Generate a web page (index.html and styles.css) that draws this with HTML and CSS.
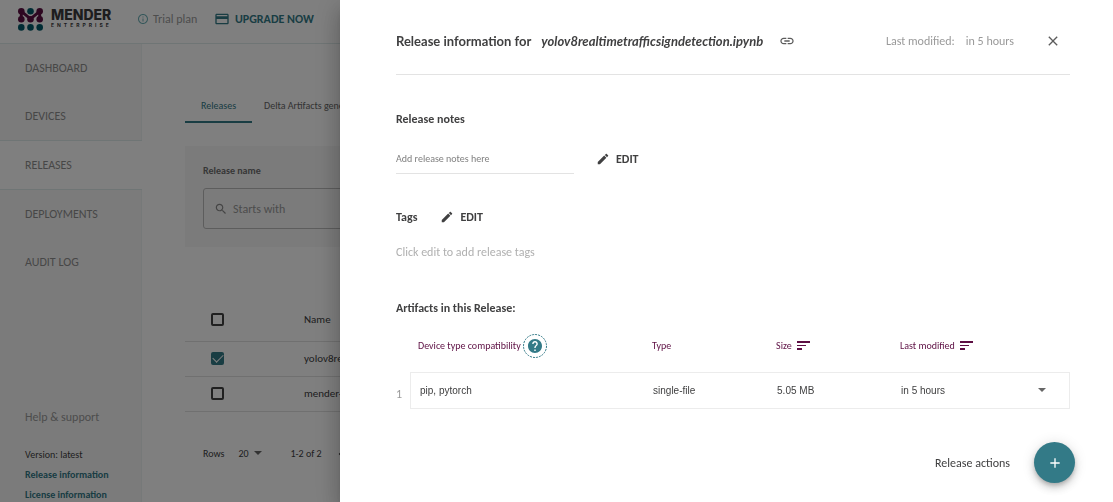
FILE: index.html
```html
<!DOCTYPE html>
<html lang="en">
<head>
<meta charset="utf-8">
<meta name="viewport" content="width=device-width, initial-scale=1">
<title>Mender – Releases</title>
<link rel="stylesheet" href="styles.css">
</head>
<body>
<div class="app">
  <header class="topbar">
    <a class="brand" href="#">
      <svg class="brand-mark" viewBox="0 0 76 70" aria-hidden="true">
        <path d="M10 10L38 33L66 10M10 10V34M66 10V34" fill="none" stroke="#5d0f43" stroke-width="9"/>
        <g fill="#5d0f43"><circle cx="10" cy="10" r="10"/><circle cx="66" cy="10" r="10"/><circle cx="10" cy="34" r="10"/><circle cx="38" cy="34" r="10"/><circle cx="66" cy="34" r="10"/></g>
        <g fill="#015969"><circle cx="38" cy="10" r="10"/><circle cx="10" cy="59" r="10"/><circle cx="38" cy="59" r="10"/><circle cx="66" cy="59" r="10"/></g>
      </svg>
      <span class="brand-text"><span class="brand-name">MENDER</span><span class="brand-tier">ENTERPRISE</span></span>
    </a>
    <span class="plan">
      <svg class="icon-10" viewBox="2 2 20 20" aria-hidden="true"><path fill="#6db0b7" d="M11 7h2v2h-2zm0 4h2v6h-2zm1-9C6.480 2 2 6.480 2 12s4.480 10 10 10 10-4.480 10-10S17.520 2 12 2zm0 18c-4.410 0-8-3.590-8-8s3.590-8 8-8 8 3.590 8 8-3.590 8-8 8z"/></svg>
      Trial plan
    </span>
    <a class="upgrade" href="#">
      <svg class="icon-16" viewBox="0 0 24 24" aria-hidden="true"><path fill="currentColor" d="M20 4H4c-1.110 0-1.990.890-1.990 2L2 18c0 1.110.890 2 2 2h16c1.110 0 2-.890 2-2V6c0-1.110-.890-2-2-2zm0 14H4v-6h16v6zm0-10H4V6h16v2z"/></svg>
      UPGRADE NOW
    </a>
  </header>
  <div class="body">
    <nav class="sidebar">
      <a class="nav-item" href="#">DASHBOARD</a>
      <a class="nav-item" href="#">DEVICES</a>
      <a class="nav-item active" href="#">RELEASES</a>
      <a class="nav-item" href="#">DEPLOYMENTS</a>
      <a class="nav-item" href="#">AUDIT LOG</a>
      <div class="nav-foot">
        <a class="help" href="#">Help &amp; support</a>
        <span>Version: latest</span>
        <a class="info" href="#">Release information</a>
        <a class="info" href="#">License information</a>
      </div>
    </nav>
    <main class="content">
      <div class="tabs">
        <button class="tab selected" type="button">Releases</button>
        <button class="tab" type="button">Delta Artifacts generation</button>
      </div>
      <div class="filters">
        <label for="release-name">Release name</label>
        <div class="search">
          <svg class="icon-14" viewBox="0 0 24 24" aria-hidden="true"><path fill="currentColor" d="M15.500 14h-.790l-.280-.270C15.410 12.590 16 11.110 16 9.500 16 5.910 13.090 3 9.500 3S3 5.910 3 9.500 5.910 16 9.500 16c1.610 0 3.090-.590 4.230-1.570l.270.280v.790l5 4.990L20.490 19l-4.990-5zm-6 0C7.010 14 5 11.990 5 9.500S7.010 5 9.500 5 14 7.010 14 9.500 11.990 14 9.500 14z"/></svg>
          <input id="release-name" type="text" placeholder="Starts with">
        </div>
      </div>
      <table class="releases">
        <thead><tr><th class="pick"><input type="checkbox" aria-label="Select all"></th><th>Name</th></tr></thead>
        <tbody>
          <tr><td class="pick"><input type="checkbox" aria-label="Select first release" checked></td><td>yolov8realtime</td></tr>
          <tr><td class="pick"><input type="checkbox" aria-label="Select second release"></td><td>mender-demo</td></tr>
        </tbody>
      </table>
      <div class="pager">
        <label for="rows">Rows</label>
        <span class="rows-field">
          <select id="rows"><option>20</option><option>50</option></select>
          <svg class="caret" viewBox="0 0 10 5" aria-hidden="true"><path fill="currentColor" d="M1 0h8L5 4z"/></svg>
        </span>
        <span>1-2 of 2</span>
        <button class="prev" type="button" aria-label="Previous page"><svg class="icon-14" viewBox="0 0 24 24" aria-hidden="true"><path fill="currentColor" d="M15.410 7.410L14 6l-6 6 6 6 1.410-1.410L10.830 12z"/></svg></button>
      </div>
    </main>
  </div>
</div>
<div class="backdrop"></div>
<aside class="drawer" aria-label="Release information">
  <header class="drawer-head">
    <h1>Release information for <em>yolov8realtimetrafficsigndetection.ipynb</em></h1>
    <button class="icon-button" type="button" aria-label="Copy link"><svg class="icon-16" viewBox="0 0 24 24" aria-hidden="true"><path fill="currentColor" d="M3.900 12c0-1.710 1.390-3.100 3.100-3.100h4V7H7c-2.760 0-5 2.240-5 5s2.240 5 5 5h4v-1.900H7c-1.710 0-3.100-1.390-3.100-3.100zM8 13h8v-2H8v2zm9-6h-4v1.900h4c1.710 0 3.100 1.390 3.100 3.100s-1.390 3.100-3.100 3.100h-4V17h4c2.760 0 5-2.240 5-5s-2.240-5-5-5z"/></svg></button>
    <p class="modified"><span>Last modified:</span><time>in 5 hours</time></p>
    <button class="icon-button" type="button" aria-label="Close"><svg class="icon-16" viewBox="0 0 24 24" aria-hidden="true"><path fill="currentColor" d="M19 6.410L17.590 5 12 10.590 6.410 5 5 6.410 10.590 12 5 17.590 6.410 19 12 13.410 17.590 19 19 17.590 13.410 12z"/></svg></button>
  </header>
  <section class="notes">
    <h2><label for="notes">Release notes</label></h2>
    <div class="notes-row">
      <input id="notes" type="text" placeholder="Add release notes here">
      <button class="edit" type="button"><svg class="icon-14" viewBox="0 0 24 24" aria-hidden="true"><path fill="currentColor" d="M3 17.250V21h3.750L17.810 9.940l-3.750-3.750L3 17.250zM20.710 7.040c.390-.390.390-1.020 0-1.410l-2.340-2.340c-.390-.390-1.020-.390-1.410 0l-1.830 1.830 3.750 3.750 1.830-1.830z"/></svg>EDIT</button>
    </div>
  </section>
  <section class="tags">
    <div class="tags-row">
      <h2>Tags</h2>
      <button class="edit" type="button"><svg class="icon-14" viewBox="0 0 24 24" aria-hidden="true"><path fill="currentColor" d="M3 17.250V21h3.750L17.810 9.940l-3.750-3.750L3 17.250zM20.710 7.040c.390-.390.390-1.020 0-1.410l-2.340-2.340c-.390-.390-1.020-.390-1.410 0l-1.830 1.830 3.750 3.750 1.830-1.830z"/></svg>EDIT</button>
    </div>
    <p>Click edit to add release tags</p>
  </section>
  <section class="artifacts">
    <h2>Artifacts in this Release:</h2>
    <table>
      <colgroup><col class="c-index"><col><col class="c-data"><col class="c-data"><col class="c-data"><col class="c-toggle"></colgroup>
      <thead>
        <tr>
          <th></th>
          <th><span class="head">Device type compatibility
            <button class="hint" type="button" aria-label="Help"><svg viewBox="0 0 24 24" aria-hidden="true"><circle cx="12" cy="12" r="11.500" fill="none" stroke="currentColor" stroke-dasharray="2 1"/><path fill="currentColor" transform="translate(3.600 3.600) scale(.7)" d="M12 2C6.480 2 2 6.480 2 12s4.480 10 10 10 10-4.480 10-10S17.520 2 12 2zm1 17h-2v-2h2v2zm2.070-7.750l-.900.920C13.450 12.900 13 13.500 13 15h-2v-.500c0-1.100.450-2.100 1.170-2.830l1.240-1.260c.370-.360.590-.860.590-1.410 0-1.100-.900-2-2-2s-2 .900-2 2H8c0-2.210 1.790-4 4-4s4 1.790 4 4c0 .880-.360 1.680-.930 2.250z"/></svg></button></span></th>
          <th>Type</th>
          <th><span class="head">Size <svg class="sort" viewBox="0 0 13 9" aria-hidden="true"><path fill="currentColor" d="M0 0h13v2H0zM0 4h9v1H0zM0 7h5v2H0z"/></svg></span></th>
          <th><span class="head">Last modified <svg class="sort" viewBox="0 0 13 9" aria-hidden="true"><path fill="currentColor" d="M0 0h13v2H0zM0 4h9v1H0zM0 7h5v2H0z"/></svg></span></th>
          <th></th>
        </tr>
      </thead>
      <tbody>
        <tr>
          <td class="index">1</td>
          <td>pip, pytorch</td>
          <td>single-file</td>
          <td>5.05 MB</td>
          <td>in 5 hours</td>
          <td class="toggle"><button type="button" aria-label="Expand artifact"><svg class="caret" viewBox="0 0 10 5" aria-hidden="true"><path fill="currentColor" d="M1 0h8L5 4z"/></svg></button></td>
        </tr>
      </tbody>
    </table>
  </section>
  <footer class="actions">
    <span id="actions-label">Release actions</span>
    <button class="fab" type="button" aria-labelledby="actions-label"><svg class="icon-16" viewBox="0 0 24 24" aria-hidden="true"><path fill="currentColor" d="M19 13h-6v6h-2v-6H5v-2h6V5h2v6h6v2z"/></svg></button>
  </footer>
</aside>
</body>
</html>
```

FILE: styles.css
```css
* { box-sizing: border-box; }

body {
  margin: 0;
  font: 12px/16px Carlito, Lato, sans-serif;
  color: #404041;
  background: #fff;
}

a { color: inherit; text-decoration: none; }
h1, h2, p { margin: 0; }
svg { display: block; flex: none; }

button {
  padding: 0;
  border: 0;
  background: none;
  color: inherit;
  font: inherit;
  cursor: pointer;
}

.icon-10 { width: 10px; height: 10px; }
.icon-14 { width: 14px; height: 14px; }
.icon-16 { width: 16px; height: 16px; }

/* Application behind the drawer */
.app {
  display: flex;
  flex-direction: column;
  height: 100vh;
  overflow: hidden;
}

.topbar {
  display: flex;
  align-items: center;
  flex: none;
  height: 44px;
  padding: 0 18px 5px;
  border-bottom: 1px solid #dfebeb;
}

.brand { display: flex; align-items: center; gap: 8px; width: 120px; }
.brand-mark { width: 25px; height: 23px; }
.brand-text { display: flex; flex-direction: column; gap: 2px; padding-bottom: 1px; color: #3a3a3c; }
.brand-name { font: 800 14px/12px Inter, sans-serif; }
.brand-tier { font: 700 5px/5px Inter, sans-serif; letter-spacing: 3px; }

.plan {
  display: flex;
  align-items: center;
  gap: 5px;
  width: 76px;
  white-space: nowrap;
  color: #9a9a9a;
}

.upgrade {
  display: flex;
  align-items: center;
  gap: 5px;
  font-weight: 700;
  color: #337a87;
}

.body { display: flex; flex: 1; min-height: 0; }

.sidebar {
  display: flex;
  flex-direction: column;
  flex: none;
  width: 142px;
  background: #f7f7f7;
  border-right: 1px solid #edf2f2;
}

.nav-item {
  flex: none;
  padding: 16px 25px;
  color: #8f8f8f;
}

.nav-item.active {
  margin-right: -1px;
  border: solid #dfebeb;
  border-width: 1px 0;
  background: #fff;
}

.nav-foot {
  display: flex;
  flex-direction: column;
  gap: 4px;
  margin: auto 0 -1px;
  padding-left: 25px;
  font-size: 10px;
}

.help { margin-bottom: 18px; font-size: 12px; color: #9a9a9a; }
.info { font-weight: 700; color: #337a87; }

.content { flex: 1; min-width: 0; padding: 44px 43px 0; }

.tabs { display: flex; }

.tab {
  min-width: 67px;
  padding: 10px 12px 7px;
  border-bottom: 2px solid transparent;
  font-size: 10px;
  white-space: nowrap;
  color: #666;
}

.tab.selected { border-color: #337a87; color: #337a87; }

.filters {
  margin-top: 23px;
  padding: 17px 18px 18px;
  background: #f7f7f7;
  font-size: 10px;
  font-weight: 700;
  color: #6f6f6f;
}

.search {
  display: flex;
  align-items: center;
  gap: 5px;
  height: 41px;
  margin-top: 9px;
  padding: 0 10px;
  border: 1px solid #bbb;
  border-radius: 3px;
  color: #8a8a8a;
}

.search input {
  flex: 1;
  min-width: 0;
  padding: 0;
  border: 0;
  outline: 0;
  background: none;
  font: 12px/16px Carlito, Lato, sans-serif;
}

.search input::placeholder { color: #999; }

.releases {
  width: 100%;
  margin-top: 52px;
  border-collapse: collapse;
  font-size: 11px;
}

.releases th, .releases td {
  height: 35px;
  padding: 0;
  border-bottom: 1px solid #e0e0e0;
  text-align: left;
  font-weight: 400;
}

.releases th { height: 42px; }
.releases .pick { width: 119px; padding-left: 26px; }

.releases input {
  display: grid;
  place-items: center;
  width: 13px;
  height: 13px;
  margin: 0;
  appearance: none;
  border: 2px solid #404041;
  border-radius: 2px;
}

.releases input:checked {
  border-color: #337a87;
  background: #337a87;
}

.releases input:checked::after {
  content: "";
  width: 9px;
  height: 5px;
  margin-bottom: 3px;
  border: solid #fff;
  border-width: 0 0 1px 1px;
  transform: rotate(-45deg);
}

.pager {
  display: flex;
  align-items: center;
  margin-top: 34px;
  padding-left: 18px;
  font-size: 10px;
}

.rows-field { display: flex; align-items: center; margin: 0 27px 0 14px; }

.rows-field select {
  width: 15px;
  padding: 0;
  border: 0;
  appearance: none;
  background: none;
  color: inherit;
  font: 10px/16px Carlito, Lato, sans-serif;
}

.caret { width: 10px; height: 5px; color: #666; }
.prev { margin-left: 12px; }

.backdrop {
  position: fixed;
  inset: 0;
  background: rgba(0, 0, 0, 0.5);
}

/* Release drawer */
.drawer {
  position: fixed;
  inset: 0 0 0 340px;
  display: flex;
  flex-direction: column;
  padding: 0 43px 19px 56px;
  overflow: auto;
  background: #fff;
  box-shadow: 0 7px 9px -4px rgba(0, 0, 0, 0.2), 0 14px 21px 2px rgba(0, 0, 0, 0.14), 0 5px 26px 4px rgba(0, 0, 0, 0.12);
}

.drawer-head {
  display: flex;
  align-items: center;
  padding: 29px 9px 21px 0;
  border-bottom: 1px solid #e3e3e3;
}

h1 {
  display: flex;
  gap: 10px;
  margin-right: 16px;
  font: 700 13px/24px Lato, sans-serif;
  white-space: nowrap;
}

.icon-button { color: #5c5c5c; }

.modified {
  display: flex;
  gap: 11px;
  margin: 0 31px 0 auto;
  white-space: nowrap;
  color: #9a9a9a;
}

h2 { font-size: 12px; line-height: 16px; font-weight: 700; }

.notes { padding-top: 36px; }
.notes-row { display: flex; align-items: center; gap: 22px; margin-top: 16px; }

.notes-row input {
  width: 178px;
  height: 31px;
  padding: 0;
  border: 0;
  border-bottom: 1px solid #e3e3e3;
  outline: 0;
  font: 10px/16px Carlito, Lato, sans-serif;
}

.notes-row input::placeholder { color: #808080; }

.edit { display: flex; align-items: center; gap: 6px; font-weight: 700; }

.tags { padding-top: 35px; }
.tags-row { display: flex; align-items: center; gap: 23px; }
.tags p { margin-top: 19px; color: #b0b0b0; }

.artifacts { padding-top: 40px; }

.artifacts table {
  width: 100%;
  margin-top: 12px;
  table-layout: fixed;
  border-spacing: 0;
  font-size: 10px;
}

.c-index { width: 14px; }
.c-data { width: 18.4%; }
.c-toggle { width: 8%; }

.artifacts th {
  height: 44px;
  padding: 0 0 0 8px;
  text-align: left;
  vertical-align: top;
  line-height: 35px;
  font-weight: 400;
  white-space: nowrap;
  color: #5d0f43;
}

.head { display: flex; align-items: center; gap: 5px; height: 35px; }
.sort { width: 13px; height: 9px; }

.hint { margin-left: -3px; color: #337a87; }
.hint svg { width: 24px; height: 24px; }

.artifacts td {
  height: 37px;
  padding: 0 0 0 9px;
  border: solid #ececec;
  border-width: 1px 0;
  font-family: "Liberation Sans", sans-serif;
}

.artifacts td:nth-child(2) { border-left-width: 1px; }
.artifacts td.toggle { border-right-width: 1px; }

.artifacts td.index {
  padding: 6px 0 0;
  border: 0;
  font: 12px/16px Carlito, Lato, sans-serif;
  color: #9a9a9a;
}

.toggle button { display: block; margin-left: 12px; }

.actions {
  display: flex;
  align-items: center;
  justify-content: flex-end;
  gap: 24px;
  margin: auto -5px 0 0;
}

.fab {
  display: grid;
  place-items: center;
  width: 41px;
  height: 41px;
  border-radius: 50%;
  background: #337a87;
  color: #fff;
  box-shadow: 0 3px 4px -1px rgba(0, 0, 0, 0.2), 0 5px 8px rgba(0, 0, 0, 0.14), 0 1px 14px rgba(0, 0, 0, 0.12);
}
```
